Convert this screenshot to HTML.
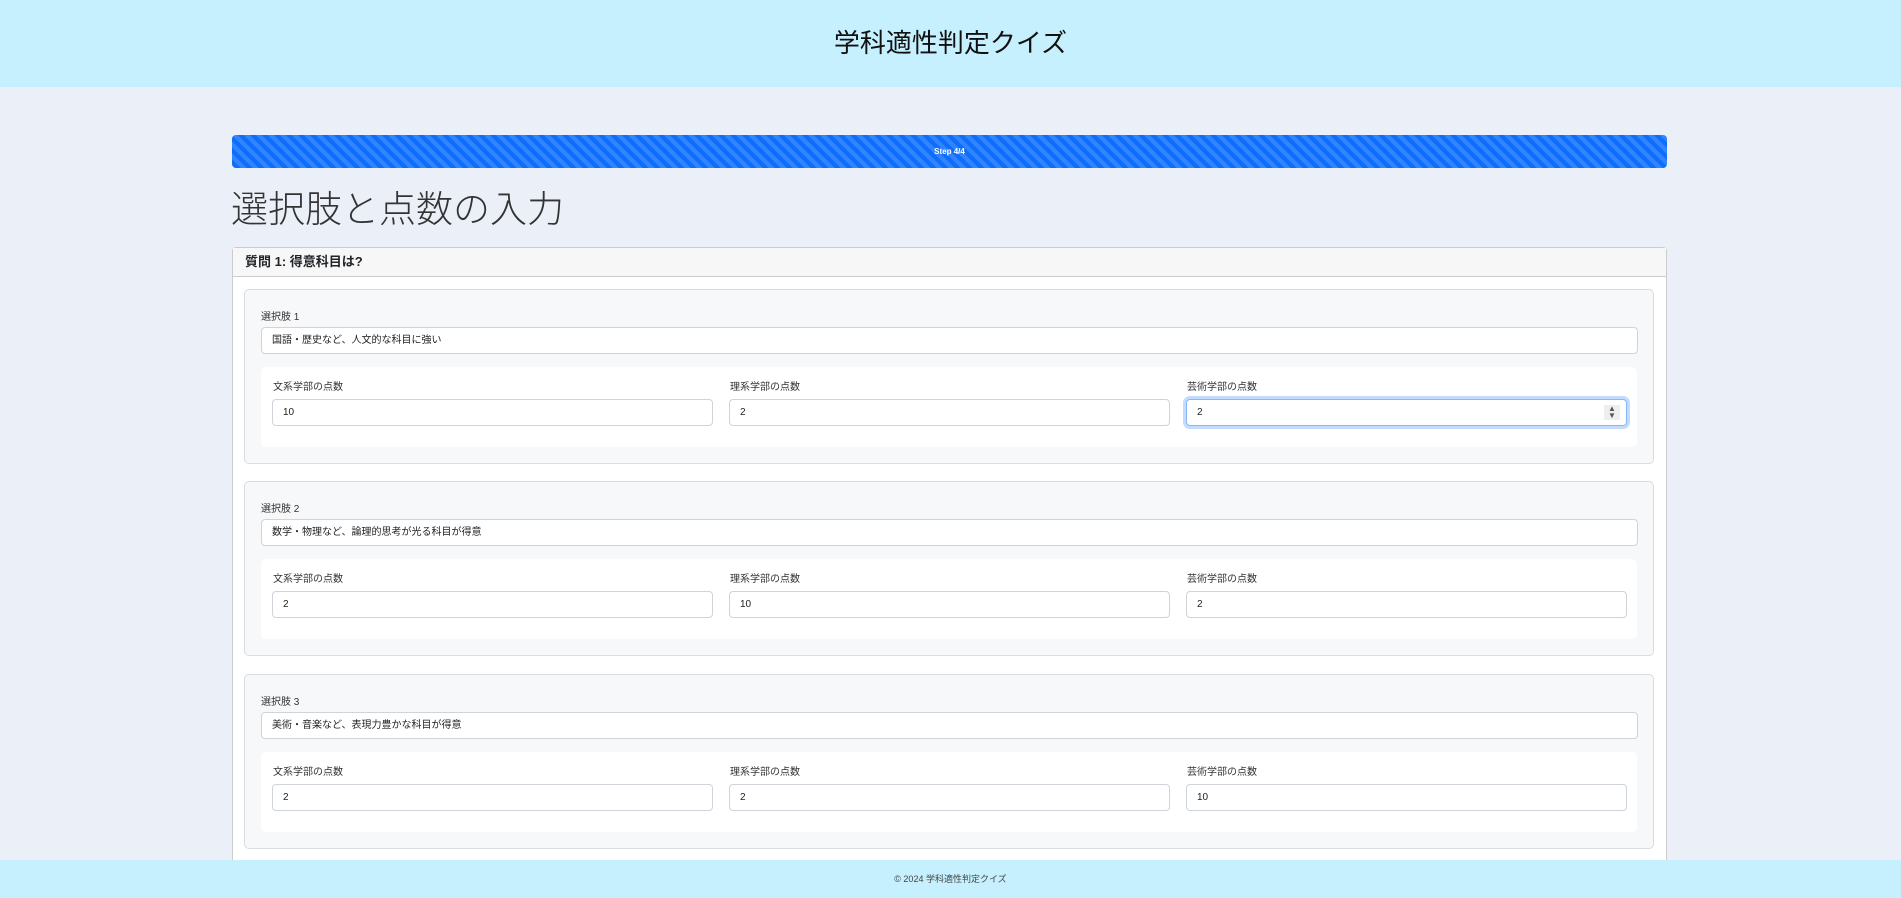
<!DOCTYPE html>
<html><head><meta charset="utf-8"><style>
*{box-sizing:border-box;margin:0;padding:0}
html,body{width:1901px;height:898px;overflow:hidden}
body{background:#ebeff8;font-family:"Liberation Sans","Noto Sans CJK JP",sans-serif;color:#212529;position:relative}
.hdr{position:absolute;left:0;top:0;width:1901px;height:87px;background:#c6f0fe;text-align:center;font-size:26px;line-height:86px;color:#111}
.prog{position:absolute;left:232px;top:135px;width:1435px;height:33px;border-radius:4px;background-color:#0d6efd;background-image:linear-gradient(45deg,rgba(255,255,255,.15) 25%,transparent 25%,transparent 50%,rgba(255,255,255,.15) 50%,rgba(255,255,255,.15) 75%,transparent 75%,transparent);background-size:12px 12px;color:#fff;font-size:8px;font-weight:bold;text-align:center;line-height:33px}
h1{position:absolute;left:231px;top:186px;font-size:37px;font-weight:300;color:#333;line-height:48px}
.card{position:absolute;left:232px;top:247px;width:1435px;height:651px;background:#fff;border:1px solid #ccc;border-radius:4px 4px 0 0}
.ch{height:29px;background:#f7f7f7;border-bottom:1px solid #ccc;font-size:13px;font-weight:bold;padding-left:12px;line-height:28px}
.box{position:absolute;left:244px;width:1410px;height:175px;background:#f7f8fa;border:1px solid #d9dce0;border-radius:5px}
.lab{position:absolute;font-size:10px;color:#333}
.inp{position:absolute;height:27px;background:#fff;border:1px solid #ced4da;border-radius:4px;font-size:10px;line-height:25px;padding-left:10px;color:#222}
.row{position:absolute;left:16px;top:77px;width:1376px;height:80px;background:#fff;border-radius:5px}
.foot{position:absolute;left:0;top:860px;width:1901px;height:38px;background:#c6f0fe;text-align:center;font-size:9px;line-height:38px;color:#444}
.focus{border:1px solid #86b7fe;box-shadow:0 0 0 3px rgba(13,110,253,.25)}
</style></head><body>
<div class="hdr">学科適性判定クイズ</div>
<div class="prog">Step 4/4</div>
<h1>選択肢と点数の入力</h1>
<div class="card"><div class="ch">質問 1: 得意科目は?</div></div>

<div class="box" style="top:289px">
<div class="lab" style="left:16px;top:18px">選択肢 1</div>
<div class="inp" style="left:16px;top:37px;width:1377px">国語・歴史など、人文的な科目に強い</div>
<div class="row">
<div class="lab" style="left:12px;top:11px">文系学部の点数</div><div class="inp" style="left:11px;top:32px;width:441px">10</div>
<div class="lab" style="left:469px;top:11px">理系学部の点数</div><div class="inp" style="left:468px;top:32px;width:441px">2</div>
<div class="lab" style="left:926px;top:11px">芸術学部の点数</div><div class="inp focus" style="left:925px;top:32px;width:441px">2<span style="position:absolute;right:6px;top:5px;width:16px;height:15px;background:#eee;font-size:8px;line-height:7px;text-align:center;color:#555">▲<br>▼</span></div>
</div></div>

<div class="box" style="top:481px">
<div class="lab" style="left:16px;top:18px">選択肢 2</div>
<div class="inp" style="left:16px;top:37px;width:1377px">数学・物理など、論理的思考が光る科目が得意</div>
<div class="row">
<div class="lab" style="left:12px;top:11px">文系学部の点数</div><div class="inp" style="left:11px;top:32px;width:441px">2</div>
<div class="lab" style="left:469px;top:11px">理系学部の点数</div><div class="inp" style="left:468px;top:32px;width:441px">10</div>
<div class="lab" style="left:926px;top:11px">芸術学部の点数</div><div class="inp" style="left:925px;top:32px;width:441px">2</div>
</div></div>

<div class="box" style="top:674px">
<div class="lab" style="left:16px;top:18px">選択肢 3</div>
<div class="inp" style="left:16px;top:37px;width:1377px">美術・音楽など、表現力豊かな科目が得意</div>
<div class="row">
<div class="lab" style="left:12px;top:11px">文系学部の点数</div><div class="inp" style="left:11px;top:32px;width:441px">2</div>
<div class="lab" style="left:469px;top:11px">理系学部の点数</div><div class="inp" style="left:468px;top:32px;width:441px">2</div>
<div class="lab" style="left:926px;top:11px">芸術学部の点数</div><div class="inp" style="left:925px;top:32px;width:441px">10</div>
</div></div>

<div class="foot">© 2024 学科適性判定クイズ</div>
</body></html>
